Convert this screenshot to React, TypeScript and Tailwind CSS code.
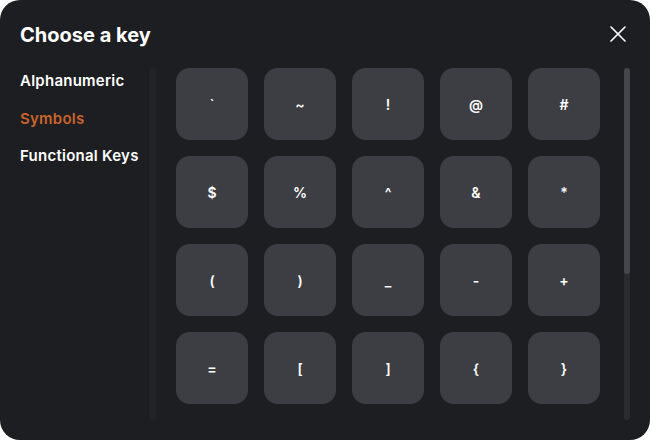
import { X } from "lucide-react";

const keys = ["`", "~", "!", "@", "#", "$", "%", "^", "&", "*", "(", ")", "_", "-", "+", "=", "[", "]", "{", "}"];

const tabs = [
  { label: "Alphanumeric", active: false },
  { label: "Symbols", active: true },
  { label: "Functional Keys", active: false },
];

export default function App() {
  return (
    <div className="w-[650px] h-[440px] bg-white" style={{ fontFamily: "Inter, 'Noto Sans', sans-serif" }}>
      <div className="w-full h-full rounded-[20px] bg-[#1d1e22] flex flex-col overflow-hidden">
        {/* Header */}
        <div className="h-[68px] flex items-start justify-between pl-5 pr-[18px] pt-[22px]">
          <h1 className="text-[20px] leading-[26px] font-bold text-white">Choose a key</h1>
          <button className="text-white mt-[-2px]">
            <X className="w-[28px] h-[28px]" strokeWidth={1.4} />
          </button>
        </div>

        {/* Body */}
        <div className="flex h-[352px]">
          <nav className="w-[149px] pl-5 pt-[1px] flex flex-col gap-[13.5px]">
            {tabs.map((t) => (
              <div
                key={t.label}
                className={
                  "text-[15px] leading-6 font-semibold tracking-[0.25px] " +
                  (t.active ? "text-[#c8642b]" : "text-white")
                }
              >
                {t.label}
              </div>
            ))}
          </nav>
          <div className="w-[7px] h-full bg-[#222327] rounded-[3px]" />

          <div className="flex-1 pl-5 overflow-hidden">
            <div className="grid grid-cols-[repeat(5,72px)] gap-4">
              {keys.map((k) => (
                <button
                  key={k}
                  className="w-[72px] h-[72px] rounded-[14px] bg-[#3d3e43] flex items-center justify-center text-white text-[14px] font-semibold"
                >
                  {k}
                </button>
              ))}
            </div>
          </div>

          {/* Scrollbar */}
          <div className="w-[6px] h-full bg-[#2a2b2f] rounded-[3px] mr-5 flex flex-col">
            <div className="h-[206px] bg-[#46474c] rounded-[3px]" />
          </div>
        </div>
      </div>
    </div>
  );
}
